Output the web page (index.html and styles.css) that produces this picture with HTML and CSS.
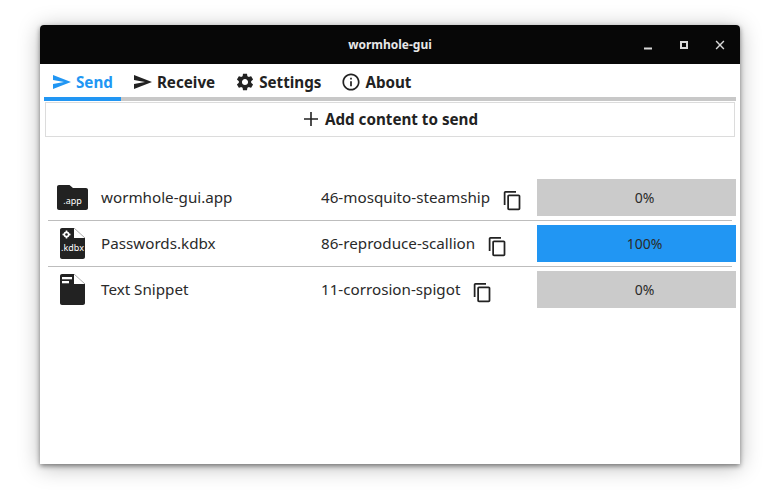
FILE: index.html
```html
<!DOCTYPE html>
<html lang="en">
<head>
  <meta charset="UTF-8">
  <title>wormhole-gui</title>
  <link rel="stylesheet" href="styles.css">
</head>
<body>
  <div class="window">
    <header class="titlebar">
      <span class="title">wormhole-gui</span>
      <div class="win-controls">
        <svg class="win-btn" viewBox="0 0 10 10"><rect x="1" y="7.500" width="8" height="2"/></svg>
        <svg class="win-btn" viewBox="0 0 10 10"><path fill-rule="evenodd" d="M1 1h8v8H1zM3 3v4h4V3z"/></svg>
        <svg class="win-btn" viewBox="0 0 10 10"><path d="M1.600 0.600L5 4l3.400-3.400 1 1L6 5l3.400 3.400-1 1L5 6 1.600 9.400l-1-1L4 5 .6 1.600z"/></svg>
      </div>
    </header>

    <nav class="tabs">
      <a class="tab active">
        <svg class="tab-icon" viewBox="0 0 18 18"><path d="M0 2l18 7-18 7v-5l11-2-11-2z"/></svg>
        Send
      </a>
      <a class="tab">
        <svg class="tab-icon" viewBox="0 0 18 18"><path d="M0 2l18 7-18 7v-5l11-2-11-2z"/></svg>
        Receive
      </a>
      <a class="tab">
        <svg class="tab-icon" viewBox="2.500 1.500 19 21"><path d="M19.140 12.940c.04-.3.06-.61.06-.94 0-.32-.02-.64-.07-.94l2.030-1.580c.18-.14.23-.41.12-.61l-1.920-3.320c-.12-.22-.37-.29-.59-.22l-2.390.96c-.5-.38-1.030-.7-1.620-.94l-.36-2.540c-.04-.24-.24-.41-.48-.41h-3.840c-.24 0-.43.17-.47.41l-.36 2.540c-.59.24-1.130.57-1.620.94l-2.390-.96c-.22-.08-.47 0-.59.22L2.740 8.870c-.12.21-.08.47.12.61l2.030 1.580c-.05.3-.09.63-.09.94s.02.64.07.94l-2.030 1.580c-.18.14-.23.41-.12.61l1.920 3.320c.12.22.37.29.59.22l2.390-.96c.5.38 1.030.7 1.620.94l.36 2.540c.05.24.24.41.48.41h3.840c.24 0 .44-.17.47-.41l.36-2.540c.59-.24 1.130-.56 1.620-.94l2.390.96c.22.08.47 0 .59-.22l1.920-3.320c.12-.22.07-.47-.12-.61l-2.010-1.580zM12 15.600c-1.980 0-3.600-1.620-3.600-3.600s1.620-3.600 3.600-3.600 3.600 1.620 3.600 3.600-1.620 3.600-3.600 3.600z"/></svg>
        Settings
      </a>
      <a class="tab">
        <svg class="tab-icon" viewBox="1.500 1.500 21 21"><path d="M11 7h2v2h-2zm0 4h2v6h-2zm1-9C6.480 2 2 6.480 2 12s4.480 10 10 10 10-4.480 10-10S17.520 2 12 2zm0 18c-4.410 0-8-3.590-8-8s3.590-8 8-8 8 3.590 8 8-3.590 8-8 8z"/></svg>
        About
      </a>
    </nav>
    <div class="tab-rule"><span class="tab-rule-active"></span></div>

    <button class="add-btn">
      <svg class="add-icon" viewBox="0 0 24 24"><path d="M19 12.800h-6.200V19h-1.600v-6.200H5v-1.600h6.200V5h1.600v6.200H19z"/></svg>
      Add content to send
    </button>

    <section class="list">
      <div class="row">
        <div class="file-icon">
          <svg viewBox="0 0 31 25"><path d="M2 0h10.500l3.500 3h13c1.100 0 2 .9 2 2v18c0 1.100-.9 2-2 2H2c-1.100 0-2-.9-2-2V2C0 .9.900 0 2 0z"/></svg>
          <span class="ext ext-app">.app</span>
        </div>
        <span class="name">wormhole-gui.app</span>
        <div class="code"><span class="code-text">46-mosquito-steamship</span><svg class="copy" viewBox="0 0 24 24"><path d="M16 1H4c-1.100 0-2 .9-2 2v14h2V3h12V1zm3 4H8c-1.100 0-2 .9-2 2v14c0 1.100.9 2 2 2h11c1.100 0 2-.9 2-2V7c0-1.100-.9-2-2-2zm0 16H8V7h11v14z"/></svg></div>
        <div class="progress">0%</div>
      </div>
      <hr class="sep">
      <div class="row">
        <div class="file-icon">
          <svg viewBox="0 0 31 31">
            <path d="M5 0C3.900 0 3 .9 3 2v27c0 1.100.9 2 2 2h21c1.100 0 2-.9 2-2V10h-11V0z"/>
            <path class="fold" d="M17 0l11 10"/>
            <circle class="cut" cx="9.500" cy="6.500" r="3"/>
            <g class="cut"><rect x="8.700" y="2.500" width="1.600" height="8"/><rect x="5.500" y="5.700" width="8" height="1.600"/></g>
            <circle cx="9.500" cy="6.500" r="1.300"/>
          </svg>
          <span class="ext ext-doc">.kdbx</span>
        </div>
        <span class="name">Passwords.kdbx</span>
        <div class="code"><span class="code-text">86-reproduce-scallion</span><svg class="copy" viewBox="0 0 24 24"><path d="M16 1H4c-1.100 0-2 .9-2 2v14h2V3h12V1zm3 4H8c-1.100 0-2 .9-2 2v14c0 1.100.9 2 2 2h11c1.100 0 2-.9 2-2V7c0-1.100-.9-2-2-2zm0 16H8V7h11v14z"/></svg></div>
        <div class="progress done">100%</div>
      </div>
      <hr class="sep">
      <div class="row">
        <div class="file-icon">
          <svg viewBox="0 0 31 31">
            <path d="M5 0C3.900 0 3 .9 3 2v27c0 1.100.9 2 2 2h21c1.100 0 2-.9 2-2V10h-11V0z"/>
            <path class="fold" d="M17 0l11 10"/>
            <rect class="cut" x="5" y="3" width="10" height="2.300"/>
            <rect class="cut" x="5" y="7" width="7" height="2.300"/>
          </svg>
        </div>
        <span class="name">Text Snippet</span>
        <div class="code"><span class="code-text">11-corrosion-spigot</span><svg class="copy" viewBox="0 0 24 24"><path d="M16 1H4c-1.100 0-2 .9-2 2v14h2V3h12V1zm3 4H8c-1.100 0-2 .9-2 2v14c0 1.100.9 2 2 2h11c1.100 0 2-.9 2-2V7c0-1.100-.9-2-2-2zm0 16H8V7h11v14z"/></svg></div>
        <div class="progress">0%</div>
      </div>
    </section>
  </div>
</body>
</html>
```

FILE: styles.css
```css
html, body {
  margin: 0;
  height: 100%;
  background: #fff;
  overflow: hidden;
}

body {
  padding: 25px 41px 0 40px;
  box-sizing: border-box;
  font-family: "Noto Sans", sans-serif;
  color: #222;
}

.window {
  height: 439px;
  background: #fff;
  border-radius: 4px 4px 0 0;
  box-shadow: 0 2px 5px rgba(0, 0, 0, 0.45), 0 3px 22px rgba(0, 0, 0, 0.28);
}

.titlebar {
  height: 39px;
  background: #070707;
  border-radius: 4px 4px 0 0;
  display: flex;
  align-items: center;
  justify-content: center;
  position: relative;
}

.title {
  color: #e8e8e8;
  font-size: 12px;
  font-weight: 700;
}

.win-controls {
  position: absolute;
  right: 15px;
  top: 15px;
  display: flex;
  gap: 26px;
}

.win-btn {
  width: 10px;
  height: 10px;
  fill: #d8d8d8;
}

.tabs {
  display: flex;
  padding: 0 4px;
  height: 33px;
}

.tab {
  display: flex;
  align-items: center;
  gap: 5px;
  padding: 2px 8px 0 9px;
  margin-right: 4px;
  font-size: 15.2px;
  font-weight: 700;
  color: #222;
}

.tab.active {
  color: #2196f3;
}

.tab-icon {
  width: 18px;
  height: 18px;
  fill: currentColor;
}

.tab-rule {
  height: 4px;
  margin: 0 4px;
  background: #c8c8c8;
}

.tab-rule-active {
  display: block;
  width: 77px;
  height: 100%;
  background: #2196f3;
}

.add-btn {
  display: flex;
  align-items: center;
  justify-content: center;
  gap: 2px;
  width: 690px;
  height: 35px;
  margin: 1px 5px 0;
  padding: 0 3px 2px 0;
  background: #fff;
  border: 1px solid #dcdcdc;
  font-family: inherit;
  font-size: 15.2px;
  font-weight: 700;
  color: #222;
}

.add-icon {
  width: 24px;
  height: 24px;
  fill: #222;
}

.list {
  margin: 38px 4px 0;
}

.row {
  display: flex;
  align-items: center;
  padding: 4px 0;
  font-size: 15.2px;
  color: #2a2a2a;
}

.file-icon {
  position: relative;
  width: 31px;
  margin-left: 13px;
  flex: none;
  line-height: 0;
}

.file-icon svg {
  width: 31px;
  fill: #222;
}

.file-icon .cut {
  fill: #fff;
}

.file-icon .fold {
  fill: none;
  stroke: #8a8a8a;
  stroke-width: 0.7;
}

.ext {
  position: absolute;
  left: 0;
  right: 0;
  text-align: center;
  color: #fff;
  font-size: 9px;
  line-height: 12px;
}

.ext-app {
  bottom: 3px;
}

.ext-doc {
  bottom: 5px;
}

.name {
  width: 220px;
  margin-left: 13px;
  padding-bottom: 2px;
  flex: none;
}

.code {
  width: 216px;
  flex: none;
  display: flex;
  align-items: center;
  gap: 11.5px;
}

.code-text {
  padding-bottom: 2px;
}

.copy {
  width: 21px;
  height: 21px;
  fill: #222;
  margin-top: 6px;
}

.progress {
  width: 199px;
  height: 37px;
  box-sizing: border-box;
  padding-left: 16px;
  flex: none;
  background: #cbcbcb;
  display: flex;
  align-items: center;
  justify-content: center;
  font-size: 14px;
}

.progress.done {
  background: #2196f3;
}

.sep {
  margin: 0 4px;
  border: 0;
  height: 1px;
  background: #bdbdbd;
}
```
